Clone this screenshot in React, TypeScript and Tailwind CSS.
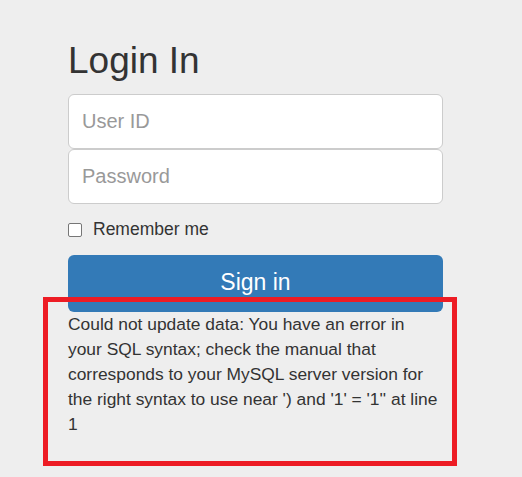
export default function App() {
  return (
    <div className="relative min-h-[477px] bg-[#eeeeee] font-['Liberation_Sans',Arial,sans-serif] text-[#333333]">
      <div className="ml-[68px] w-[375px] pt-[41px]">
        <h2 className="mb-[13px] text-[37px] leading-[40px] font-normal">Login In</h2>

        <input
          type="text"
          placeholder="User ID"
          className="block h-[55px] w-full rounded-[6px] border border-[#cccccc] bg-white px-[13px] text-[20px] outline-none placeholder:text-[#999999]"
        />
        <input
          type="password"
          placeholder="Password"
          className="block h-[55px] w-full rounded-[6px] border border-[#cccccc] bg-white px-[13px] text-[20px] outline-none placeholder:text-[#999999]"
        />

        <label className="mt-[13px] flex h-[25px] items-center gap-[11px] text-[17.5px]">
          <input
            type="checkbox"
            className="h-[14px] w-[14px] appearance-none rounded-[2px] border border-[#767676] bg-white"
          />
          Remember me
        </label>

        <button className="mt-[13px] flex h-[57px] w-full items-center justify-center rounded-[6px] bg-[#337ab7] pb-[3px] text-[23px] text-white">
          Sign in
        </button>

        <p className="text-[17.4px] leading-[25px]">
          Could not update data: You have an error in your SQL syntax; check the manual that corresponds to your MySQL
          server version for the right syntax to use near ') and '1' = '1'' at line 1
        </p>
      </div>

      {/* annotation box drawn over the error message */}
      <div className="pointer-events-none absolute left-[43px] top-[297px] h-[169px] w-[414px] border-[5px] border-[#ed1c24]" />
    </div>
  );
}
